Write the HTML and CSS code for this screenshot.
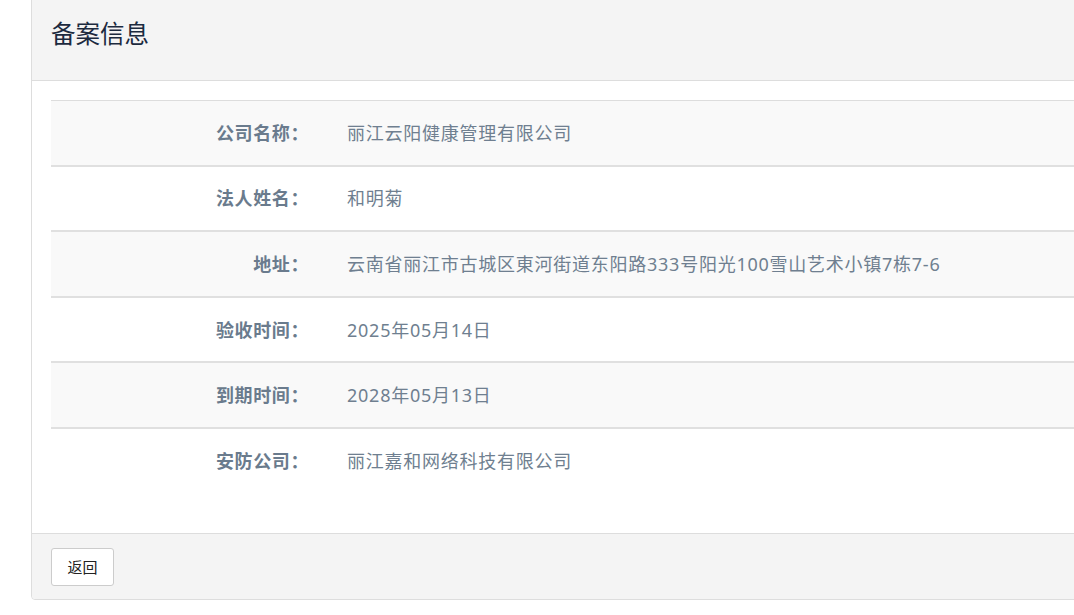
FILE: index.html
```html
<!DOCTYPE html>
<html lang="zh-CN">
<head>
<meta charset="utf-8">
<title>备案信息</title>
<link rel="stylesheet" href="styles.css">
</head>
<body>
<div class="panel">
  <div class="panel-heading">
    <h3 class="panel-title">备案信息</h3>
  </div>
  <div class="panel-body">
    <table class="info-table">
      <tbody>
        <tr><th>公司名称：</th><td>丽江云阳健康管理有限公司</td></tr>
        <tr><th>法人姓名：</th><td>和明菊</td></tr>
        <tr><th>地址：</th><td>云南省丽江市古城区東河街道东阳路333号阳光100雪山艺术小镇7栋7-6</td></tr>
        <tr><th>验收时间：</th><td>2025年05月14日</td></tr>
        <tr><th>到期时间：</th><td>2028年05月13日</td></tr>
        <tr><th>安防公司：</th><td>丽江嘉和网络科技有限公司</td></tr>
      </tbody>
    </table>
  </div>
  <div class="panel-footer">
    <button class="btn" type="button">返回</button>
  </div>
</div>
</body>
</html>
```

FILE: styles.css
```css
html, body {
  margin: 0;
  padding: 0;
  background: #fff;
  overflow: hidden;
}
body {
  font-family: "Noto Sans", "Noto Sans CJK SC", sans-serif;
  color: #333;
}
.panel {
  margin: -1px 0 0 31px;
  width: 1100px;
  border: 1px solid #ddd;
  border-radius: 0 0 4px 4px;
  background: #fff;
}
.panel-heading {
  height: 81px;
  box-sizing: border-box;
  background: #f4f4f4;
  border-bottom: 1px solid #ddd;
  padding: 20px 19px 0;
}
.panel-title {
  margin: 0;
  font-size: 24.5px;
  font-weight: normal;
  line-height: 28px;
  color: #1c2a3f;
}
.panel-body {
  padding: 19px 0 40px 19px;
}
.info-table {
  width: 100%;
  border-collapse: collapse;
  font-size: 18px;
}
.info-table tr {
  border-top: 2px solid #e0e0e0;
}
.info-table tr:first-child {
  border-top: 1px solid #ddd;
}
.info-table tr:nth-child(odd) {
  background: #f9f9f9;
}
.info-table th,
.info-table td {
  height: 63.6px;
  padding: 0;
  vertical-align: middle;
  line-height: 24px;
}
.info-table th {
  width: 258px;
  text-align: right;
  font-weight: bold;
  color: #6a7b8d;
  padding-right: 38px;
  letter-spacing: 0.6px;
}
.info-table td {
  text-align: left;
  color: #6f7f90;
  letter-spacing: 0.75px;
}
.panel-footer {
  background: #f4f4f4;
  border-top: 1px solid #ddd;
  padding: 14px 19px 13px;
  border-radius: 0 0 4px 4px;
}
.btn {
  display: block;
  width: 63px;
  height: 38px;
  background: #fff;
  border: 1px solid #ccc;
  border-radius: 3px;
  font-family: "Noto Sans CJK SC", sans-serif;
  font-size: 15px;
  color: #222;
  padding: 0;
}
```
